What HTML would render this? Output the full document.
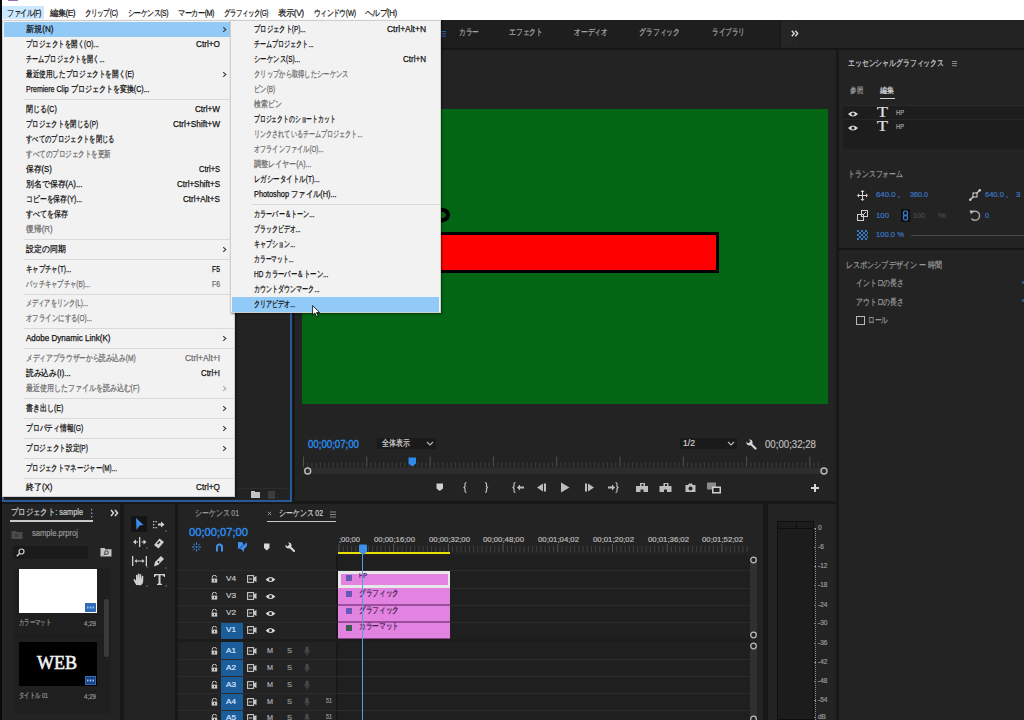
<!DOCTYPE html>
<html><head><meta charset="utf-8">
<style>
*{margin:0;padding:0;box-sizing:border-box}
html,body{width:1024px;height:720px;overflow:hidden;background:#181818;font-family:"Liberation Sans",sans-serif;position:relative}
.a{position:absolute}
.t{position:absolute;white-space:nowrap;line-height:1;transform-origin:0 0;-webkit-text-stroke:0.2px currentColor}
.panel{position:absolute;background:#232323}
.menu{position:absolute;background:#f2f2f2;box-shadow:inset 0 0 0 1px #cfcfcf,1px 1px 2px rgba(0,0,0,.45)}
.mt{position:absolute;white-space:nowrap;font-size:9px;line-height:15px;height:15px;color:#111;transform-origin:0 0;-webkit-text-stroke:0.25px currentColor}
.mt.dis{color:#6e6e6e}
.sep{position:absolute;left:22px;right:1px;height:1px;background:#d9d9d9}
.hl{position:absolute;left:2px;right:2px;height:15px;background:#91c9f7}
.arr{position:absolute;color:#3a3a3a}
.arr.dis{color:#a8a8a8}
.mb{position:absolute;letter-spacing:-0.6px;top:7.3px;height:13px;line-height:13px;font-size:9px;color:#111;white-space:nowrap;transform-origin:0 0;-webkit-text-stroke:0.2px currentColor}
.w{color:#a9a9a9;font-size:9px}
.s{-webkit-text-stroke:0.2px currentColor}
.g{color:#9a9a9a}
.b{color:#2d8ceb}
</style></head><body>

<!-- title + menubar -->
<div class="a" style="left:0;top:0;width:1024px;height:20px;background:#fff"></div>
<div class="a" style="left:8px;top:0;width:10px;height:1px;background:#9a6cc0"></div>
<div class="a" style="left:2px;top:6px;width:42px;height:13px;background:#cce8ff"></div>
<div class="mb" style="left:7px;--w:34px">ファイル(F)</div>
<div class="mb" style="left:50px;--w:25px">編集(E)</div>
<div class="mb" style="left:85px;--w:32.5px">クリップ(C)</div>
<div class="mb" style="left:127.5px;--w:40px">シーケンス(S)</div>
<div class="mb" style="left:177.5px;--w:36px">マーカー(M)</div>
<div class="mb" style="left:223.5px;--w:44px">グラフィック(G)</div>
<div class="mb" style="left:278px;--w:25.5px">表示(V)</div>
<div class="mb" style="left:313.5px;--w:41.5px">ウィンドウ(W)</div>
<div class="mb" style="left:365px;--w:31.5px">ヘルプ(H)</div>

<!-- workspace bar -->
<div class="a" style="left:0;top:20px;width:1024px;height:28px;background:#1e1e1e"></div>
<div class="a" style="left:0;top:48px;width:1024px;height:2px;background:#161616"></div>
<svg class="a" style="left:441px;top:31px" width="5" height="6"><rect x="0" y="0" width="5" height="1" fill="#2f5f9f"/><rect x="0" y="2.3" width="5" height="1" fill="#2f5f9f"/><rect x="0" y="4.6" width="5" height="1" fill="#2f5f9f"/></svg>
<div class="t w s" style="left:459px;top:28px;--w:20px">カラー</div>
<div class="t w s" style="left:509px;top:28px;--w:34px">エフェクト</div>
<div class="t w s" style="left:574px;top:28px;--w:34px">オーディオ</div>
<div class="t w s" style="left:639px;top:28px;--w:41px">グラフィック</div>
<div class="t w s" style="left:712px;top:28px;--w:33px">ライブラリ</div>
<div class="a" style="left:780px;top:20px;width:1px;height:28px;background:#161616"></div>
<div class="a" style="left:781px;top:20px;width:243px;height:28px;background:#222222"></div>
<div class="a" style="left:781px;top:22px;width:18px;height:25px;background:#252525"></div>
<svg class="a" style="left:791px;top:30px" width="8" height="7" viewBox="0 0 8 7"><polyline points="0.8,0.8 3.2,3.5 0.8,6.2" fill="none" stroke="#d8d8d8" stroke-width="1.4"/><polyline points="4.3,0.8 6.7,3.5 4.3,6.2" fill="none" stroke="#d8d8d8" stroke-width="1.4"/></svg>


<!-- source panel (behind menu) -->
<div class="panel" style="left:2px;top:50px;width:290px;height:452px;border:2px solid #275a96"></div>
<div class="a" style="left:237px;top:488px;width:52px;height:1px;background:#2c2c2c"></div>
<div class="a" style="left:251px;top:492px;width:9px;height:6px;background:#c4c4c4"></div>
<div class="a" style="left:251px;top:491px;width:4px;height:1px;background:#c4c4c4"></div>
<div class="a" style="left:268px;top:491px;width:7px;height:8px;background:#3c3c3c"></div>

<!-- program monitor -->
<div class="panel" style="left:295px;top:50px;width:541px;height:451px"></div>

<div class="a" style="left:302px;top:109px;width:526px;height:295px;background:#036614"></div>
<div class="a" style="left:320px;top:232px;width:399px;height:41px;background:#ff0000;border:3px solid #000"></div>
<svg class="a" style="left:430px;top:204px" width="24" height="22" viewBox="0 0 24 22"><path d="M8,5.5 C14.5,5 18.3,7.5 18,11.5 C17.6,15.3 13.5,16.6 8,16.6" fill="none" stroke="#000" stroke-width="4"/></svg>
<div class="t b" style="left:308px;top:439px;font-size:11px;-webkit-text-stroke:0.4px #2d8ceb;--w:51px">00;00;07;00</div>
<div class="a" style="left:377px;top:438px;width:59px;height:11px;background:#1a1a1a"></div>
<div class="t" style="left:382px;top:439px;font-size:9px;color:#cfcfcf;--w:28px">全体表示</div>
<svg class="a" style="left:426px;top:441px" width="8" height="5" viewBox="0 0 8 5"><polyline points="1,1 4,4 7,1" fill="none" stroke="#bdbdbd" stroke-width="1.1"/></svg>
<div class="a" style="left:680px;top:438px;width:57px;height:11px;background:#1a1a1a"></div>
<div class="t" style="left:683px;top:439px;font-size:9px;color:#cfcfcf;--w:12px">1/2</div>
<svg class="a" style="left:727px;top:441px" width="8" height="5" viewBox="0 0 8 5"><polyline points="1,1 4,4 7,1" fill="none" stroke="#bdbdbd" stroke-width="1.1"/></svg>
<svg class="a" style="left:746px;top:439px" width="11" height="11" viewBox="0 0 11 11"><circle cx="3.5" cy="3.5" r="3" fill="#d8d8d8"/><path d="M3.5,3.5 L9.5,9.5" stroke="#d8d8d8" stroke-width="2.2" stroke-linecap="round"/><path d="M-0.5,1.8 L1.8,-0.5 L4.6,2.3 L2.3,4.6 Z" fill="#232323"/></svg>
<div class="t" style="left:764.5px;top:439px;font-size:11px;color:#bfbfbf;--w:51px">00;00;32;28</div>
<svg class="a" style="left:296px;top:0px" width="540" height="500" viewBox="0 0 540 500">
<rect x="7" y="467.5" width="522" height="6.5" fill="#2d2d2d"/>
<rect x="7.00" y="456.5" width="1" height="10.5" fill="#505050"/>
<rect x="11.22" y="462.5" width="1" height="4.5" fill="#3e3e3e"/>
<rect x="15.44" y="462.5" width="1" height="4.5" fill="#3e3e3e"/>
<rect x="19.66" y="462.5" width="1" height="4.5" fill="#3e3e3e"/>
<rect x="23.88" y="462.5" width="1" height="4.5" fill="#3e3e3e"/>
<rect x="28.10" y="462.5" width="1" height="4.5" fill="#3e3e3e"/>
<rect x="32.32" y="462.5" width="1" height="4.5" fill="#3e3e3e"/>
<rect x="36.54" y="462.5" width="1" height="4.5" fill="#3e3e3e"/>
<rect x="40.76" y="462.5" width="1" height="4.5" fill="#3e3e3e"/>
<rect x="44.98" y="462.5" width="1" height="4.5" fill="#3e3e3e"/>
<rect x="49.20" y="462.5" width="1" height="4.5" fill="#3e3e3e"/>
<rect x="53.42" y="462.5" width="1" height="4.5" fill="#3e3e3e"/>
<rect x="57.64" y="462.5" width="1" height="4.5" fill="#3e3e3e"/>
<rect x="61.86" y="462.5" width="1" height="4.5" fill="#3e3e3e"/>
<rect x="66.08" y="462.5" width="1" height="4.5" fill="#3e3e3e"/>
<rect x="70.30" y="456.5" width="1" height="10.5" fill="#505050"/>
<rect x="74.52" y="462.5" width="1" height="4.5" fill="#3e3e3e"/>
<rect x="78.74" y="462.5" width="1" height="4.5" fill="#3e3e3e"/>
<rect x="82.96" y="462.5" width="1" height="4.5" fill="#3e3e3e"/>
<rect x="87.18" y="462.5" width="1" height="4.5" fill="#3e3e3e"/>
<rect x="91.40" y="462.5" width="1" height="4.5" fill="#3e3e3e"/>
<rect x="95.62" y="462.5" width="1" height="4.5" fill="#3e3e3e"/>
<rect x="99.84" y="462.5" width="1" height="4.5" fill="#3e3e3e"/>
<rect x="104.06" y="462.5" width="1" height="4.5" fill="#3e3e3e"/>
<rect x="108.28" y="462.5" width="1" height="4.5" fill="#3e3e3e"/>
<rect x="112.50" y="462.5" width="1" height="4.5" fill="#3e3e3e"/>
<rect x="116.72" y="462.5" width="1" height="4.5" fill="#3e3e3e"/>
<rect x="120.94" y="462.5" width="1" height="4.5" fill="#3e3e3e"/>
<rect x="125.16" y="462.5" width="1" height="4.5" fill="#3e3e3e"/>
<rect x="129.38" y="462.5" width="1" height="4.5" fill="#3e3e3e"/>
<rect x="133.60" y="456.5" width="1" height="10.5" fill="#505050"/>
<rect x="137.82" y="462.5" width="1" height="4.5" fill="#3e3e3e"/>
<rect x="142.04" y="462.5" width="1" height="4.5" fill="#3e3e3e"/>
<rect x="146.26" y="462.5" width="1" height="4.5" fill="#3e3e3e"/>
<rect x="150.48" y="462.5" width="1" height="4.5" fill="#3e3e3e"/>
<rect x="154.70" y="462.5" width="1" height="4.5" fill="#3e3e3e"/>
<rect x="158.92" y="462.5" width="1" height="4.5" fill="#3e3e3e"/>
<rect x="163.14" y="462.5" width="1" height="4.5" fill="#3e3e3e"/>
<rect x="167.36" y="462.5" width="1" height="4.5" fill="#3e3e3e"/>
<rect x="171.58" y="462.5" width="1" height="4.5" fill="#3e3e3e"/>
<rect x="175.80" y="462.5" width="1" height="4.5" fill="#3e3e3e"/>
<rect x="180.02" y="462.5" width="1" height="4.5" fill="#3e3e3e"/>
<rect x="184.24" y="462.5" width="1" height="4.5" fill="#3e3e3e"/>
<rect x="188.46" y="462.5" width="1" height="4.5" fill="#3e3e3e"/>
<rect x="192.68" y="462.5" width="1" height="4.5" fill="#3e3e3e"/>
<rect x="196.90" y="456.5" width="1" height="10.5" fill="#505050"/>
<rect x="201.12" y="462.5" width="1" height="4.5" fill="#3e3e3e"/>
<rect x="205.34" y="462.5" width="1" height="4.5" fill="#3e3e3e"/>
<rect x="209.56" y="462.5" width="1" height="4.5" fill="#3e3e3e"/>
<rect x="213.78" y="462.5" width="1" height="4.5" fill="#3e3e3e"/>
<rect x="218.00" y="462.5" width="1" height="4.5" fill="#3e3e3e"/>
<rect x="222.22" y="462.5" width="1" height="4.5" fill="#3e3e3e"/>
<rect x="226.44" y="462.5" width="1" height="4.5" fill="#3e3e3e"/>
<rect x="230.66" y="462.5" width="1" height="4.5" fill="#3e3e3e"/>
<rect x="234.88" y="462.5" width="1" height="4.5" fill="#3e3e3e"/>
<rect x="239.10" y="462.5" width="1" height="4.5" fill="#3e3e3e"/>
<rect x="243.32" y="462.5" width="1" height="4.5" fill="#3e3e3e"/>
<rect x="247.54" y="462.5" width="1" height="4.5" fill="#3e3e3e"/>
<rect x="251.76" y="462.5" width="1" height="4.5" fill="#3e3e3e"/>
<rect x="255.98" y="462.5" width="1" height="4.5" fill="#3e3e3e"/>
<rect x="260.20" y="456.5" width="1" height="10.5" fill="#505050"/>
<rect x="264.42" y="462.5" width="1" height="4.5" fill="#3e3e3e"/>
<rect x="268.64" y="462.5" width="1" height="4.5" fill="#3e3e3e"/>
<rect x="272.86" y="462.5" width="1" height="4.5" fill="#3e3e3e"/>
<rect x="277.08" y="462.5" width="1" height="4.5" fill="#3e3e3e"/>
<rect x="281.30" y="462.5" width="1" height="4.5" fill="#3e3e3e"/>
<rect x="285.52" y="462.5" width="1" height="4.5" fill="#3e3e3e"/>
<rect x="289.74" y="462.5" width="1" height="4.5" fill="#3e3e3e"/>
<rect x="293.96" y="462.5" width="1" height="4.5" fill="#3e3e3e"/>
<rect x="298.18" y="462.5" width="1" height="4.5" fill="#3e3e3e"/>
<rect x="302.40" y="462.5" width="1" height="4.5" fill="#3e3e3e"/>
<rect x="306.62" y="462.5" width="1" height="4.5" fill="#3e3e3e"/>
<rect x="310.84" y="462.5" width="1" height="4.5" fill="#3e3e3e"/>
<rect x="315.06" y="462.5" width="1" height="4.5" fill="#3e3e3e"/>
<rect x="319.28" y="462.5" width="1" height="4.5" fill="#3e3e3e"/>
<rect x="323.50" y="456.5" width="1" height="10.5" fill="#505050"/>
<rect x="327.72" y="462.5" width="1" height="4.5" fill="#3e3e3e"/>
<rect x="331.94" y="462.5" width="1" height="4.5" fill="#3e3e3e"/>
<rect x="336.16" y="462.5" width="1" height="4.5" fill="#3e3e3e"/>
<rect x="340.38" y="462.5" width="1" height="4.5" fill="#3e3e3e"/>
<rect x="344.60" y="462.5" width="1" height="4.5" fill="#3e3e3e"/>
<rect x="348.82" y="462.5" width="1" height="4.5" fill="#3e3e3e"/>
<rect x="353.04" y="462.5" width="1" height="4.5" fill="#3e3e3e"/>
<rect x="357.26" y="462.5" width="1" height="4.5" fill="#3e3e3e"/>
<rect x="361.48" y="462.5" width="1" height="4.5" fill="#3e3e3e"/>
<rect x="365.70" y="462.5" width="1" height="4.5" fill="#3e3e3e"/>
<rect x="369.92" y="462.5" width="1" height="4.5" fill="#3e3e3e"/>
<rect x="374.14" y="462.5" width="1" height="4.5" fill="#3e3e3e"/>
<rect x="378.36" y="462.5" width="1" height="4.5" fill="#3e3e3e"/>
<rect x="382.58" y="462.5" width="1" height="4.5" fill="#3e3e3e"/>
<rect x="386.80" y="456.5" width="1" height="10.5" fill="#505050"/>
<rect x="391.02" y="462.5" width="1" height="4.5" fill="#3e3e3e"/>
<rect x="395.24" y="462.5" width="1" height="4.5" fill="#3e3e3e"/>
<rect x="399.46" y="462.5" width="1" height="4.5" fill="#3e3e3e"/>
<rect x="403.68" y="462.5" width="1" height="4.5" fill="#3e3e3e"/>
<rect x="407.90" y="462.5" width="1" height="4.5" fill="#3e3e3e"/>
<rect x="412.12" y="462.5" width="1" height="4.5" fill="#3e3e3e"/>
<rect x="416.34" y="462.5" width="1" height="4.5" fill="#3e3e3e"/>
<rect x="420.56" y="462.5" width="1" height="4.5" fill="#3e3e3e"/>
<rect x="424.78" y="462.5" width="1" height="4.5" fill="#3e3e3e"/>
<rect x="429.00" y="462.5" width="1" height="4.5" fill="#3e3e3e"/>
<rect x="433.22" y="462.5" width="1" height="4.5" fill="#3e3e3e"/>
<rect x="437.44" y="462.5" width="1" height="4.5" fill="#3e3e3e"/>
<rect x="441.66" y="462.5" width="1" height="4.5" fill="#3e3e3e"/>
<rect x="445.88" y="462.5" width="1" height="4.5" fill="#3e3e3e"/>
<rect x="450.10" y="456.5" width="1" height="10.5" fill="#505050"/>
<rect x="454.32" y="462.5" width="1" height="4.5" fill="#3e3e3e"/>
<rect x="458.54" y="462.5" width="1" height="4.5" fill="#3e3e3e"/>
<rect x="462.76" y="462.5" width="1" height="4.5" fill="#3e3e3e"/>
<rect x="466.98" y="462.5" width="1" height="4.5" fill="#3e3e3e"/>
<rect x="471.20" y="462.5" width="1" height="4.5" fill="#3e3e3e"/>
<rect x="475.42" y="462.5" width="1" height="4.5" fill="#3e3e3e"/>
<rect x="479.64" y="462.5" width="1" height="4.5" fill="#3e3e3e"/>
<rect x="483.86" y="462.5" width="1" height="4.5" fill="#3e3e3e"/>
<rect x="488.08" y="462.5" width="1" height="4.5" fill="#3e3e3e"/>
<rect x="492.30" y="462.5" width="1" height="4.5" fill="#3e3e3e"/>
<rect x="496.52" y="462.5" width="1" height="4.5" fill="#3e3e3e"/>
<rect x="500.74" y="462.5" width="1" height="4.5" fill="#3e3e3e"/>
<rect x="504.96" y="462.5" width="1" height="4.5" fill="#3e3e3e"/>
<rect x="509.18" y="462.5" width="1" height="4.5" fill="#3e3e3e"/>
<rect x="513.40" y="456.5" width="1" height="10.5" fill="#505050"/>
<rect x="517.62" y="462.5" width="1" height="4.5" fill="#3e3e3e"/>
<rect x="521.84" y="462.5" width="1" height="4.5" fill="#3e3e3e"/>
<circle cx="11.7" cy="471" r="3" fill="none" stroke="#bdbdbd" stroke-width="1.4"/>
<circle cx="528" cy="471" r="3" fill="none" stroke="#bdbdbd" stroke-width="1.4"/>
<path d="M112.5,457.5 h7.5 v6 l-3.75,3 l-3.75,-3 z" fill="#2d8ceb"/>
</svg>
<svg class="a" style="left:430px;top:478px" width="400" height="20" viewBox="430 478 400 20" fill="#bdbdbd" stroke="#bdbdbd">
<path d="M436.5,483.5 h6.5 v5 l-3.25,2.5 l-3.25,-2.5 z" stroke="none" fill="#d0d0d0"/>
<path d="M466.5,482.5 q-1.5,0 -1.5,1.5 v2.5 l-1,1 l1,1 v2.5 q0,1.5 1.5,1.5" fill="none" stroke-width="1.2"/>
<path d="M485,482.5 q1.5,0 1.5,1.5 v2.5 l1,1 l-1,1 v2.5 q0,1.5 -1.5,1.5" fill="none" stroke-width="1.2"/>
<path d="M515.5,482.5 q-1.5,0 -1.5,1.5 v2.5 l-1,1 l1,1 v2.5 q0,1.5 1.5,1.5" fill="none" stroke-width="1.2"/>
<path d="M517,487.5 l3,-3 v2 h4 v2 h-4 v2 z" stroke="none"/>
<path d="M537,487.5 l6,-4 v8 z M544,483.5 h2 v8 h-2 z" stroke="none"/>
<path d="M561,482.5 l8.5,5 l-8.5,5 z" stroke="none"/>
<path d="M585,483.5 h2 v8 h-2 z M588,483.5 l6,4 l-6,4 z" stroke="none"/>
<path d="M608,486.5 h4 v-2 l3,3 l-3,3 v-2 h-4 z" stroke="none"/>
<path d="M615.5,482.5 q1.5,0 1.5,1.5 v2.5 l1,1 l-1,1 v2.5 q0,1.5 -1.5,1.5" fill="none" stroke-width="1.2"/>
<path d="M640,483 h5 v3 h3 v6 h-4.5 v-2.5 h-3 v2.5 h-4.5 v-6 h4 z" stroke="none"/>
<rect x="641.5" y="484" width="2" height="2" fill="#232323" stroke="none"/>
<path d="M663.5,483 h5 v3 h3 v6 h-4.5 v-2.5 h-3 v2.5 h-4.5 v-6 h4 z" stroke="none"/>
<rect x="665" y="484" width="2" height="2" fill="#232323" stroke="none"/>
<path d="M685.5,485 h2.5 l1,-1.5 h3 l1,1.5 h2.5 v7 h-10 z" stroke="none"/>
<circle cx="690.5" cy="488.5" r="2" fill="#232323" stroke="none"/>
<rect x="707" y="482.5" width="9" height="7" stroke="none" fill="#8a8a8a"/>
<rect x="712" y="486.5" width="9" height="7" stroke="none" fill="#d0d0d0"/>
<rect x="713.5" y="488" width="6" height="4" stroke="none" fill="#232323"/>
<path d="M814,484 h2 v3 h3 v2 h-3 v3 h-2 v-3 h-3 v-2 h3 z" stroke="none" fill="#d8d8d8"/>
</svg>

<!-- essential graphics -->
<div class="panel" style="left:839px;top:50px;width:185px;height:670px"></div>
<div class="t" style="left:848px;top:59px;font-size:9px;color:#cfcfcf;--w:96px">エッセンシャルグラフィックス</div>
<svg class="a" style="left:951px;top:60px" width="7" height="7"><rect x="1" y="1" width="5" height="0.8" fill="#a0a0a0"/><rect x="1" y="3.2" width="5" height="0.8" fill="#a0a0a0"/><rect x="1" y="5.4" width="5" height="0.8" fill="#a0a0a0"/></svg>
<div class="t" style="left:850px;top:87px;font-size:8px;color:#a0a0a0;--w:13px">参照</div>
<div class="t" style="left:880px;top:87px;font-size:8px;color:#d6d6d6;--w:14px">編集</div>
<div class="a" style="left:880px;top:97.5px;width:15px;height:1.5px;background:#cfcfcf"></div>
<div class="a" style="left:843px;top:105px;width:181px;height:44px;background:#1d1d1d"></div>
<div class="a" style="left:843px;top:105px;width:181px;height:1px;background:#2a2a2a"></div>
<div class="a" style="left:843px;top:119px;width:181px;height:1px;background:#262626"></div>
<svg class="a" style="left:847px;top:110px" width="12" height="8" viewBox="0 0 12 8"><path d="M1,4 Q6,-1 11,4 Q6,9 1,4 Z" fill="#dcdcdc"/><circle cx="6" cy="4" r="1.6" fill="#1d1d1d"/></svg>
<svg class="a" style="left:847px;top:124px" width="12" height="8" viewBox="0 0 12 8"><path d="M1,4 Q6,-1 11,4 Q6,9 1,4 Z" fill="#dcdcdc"/><circle cx="6" cy="4" r="1.6" fill="#1d1d1d"/></svg>
<div class="t" style="left:877px;top:106px;font-size:14px;font-family:'Liberation Serif',serif;color:#e0e0e0;--w:11px">T</div>
<div class="t" style="left:877px;top:120px;font-size:14px;font-family:'Liberation Serif',serif;color:#e0e0e0;--w:11px">T</div>
<div class="t" style="left:896px;top:109px;font-size:7px;color:#a8a8a8;--w:8px">HP</div>
<div class="t" style="left:896px;top:123px;font-size:7px;color:#a8a8a8;--w:8px">HP</div>
<div class="t" style="left:848px;top:170px;font-size:9px;color:#9a9a9a;--w:55px">トランスフォーム</div>
<svg class="a" style="left:857px;top:190px" width="11" height="11" viewBox="0 0 11 11" fill="#d8d8d8"><rect x="5" y="1" width="1" height="9"/><rect x="1" y="5" width="9" height="1"/><path d="M5.5,0 l2,2 h-4 z M5.5,11 l2,-2 h-4 z M0,5.5 l2,-2 v4 z M11,5.5 l-2,-2 v4 z"/></svg>
<div class="t" style="left:875.5px;top:191px;font-size:8px;color:#3a78c8;--w:24px">640.0 ,</div>
<div class="t" style="left:910px;top:191px;font-size:8px;color:#3a78c8;--w:18px">360.0</div>
<svg class="a" style="left:969px;top:189px" width="12" height="12" viewBox="0 0 12 12"><path d="M1,11 L11,1" stroke="#d0d0d0" stroke-width="1.2"/><rect x="4" y="4" width="4" height="4" fill="#232323" stroke="#d0d0d0" stroke-width="1.1"/><circle cx="1.2" cy="10.8" r="1.2" fill="#d0d0d0"/><circle cx="10.8" cy="1.2" r="1.2" fill="#d0d0d0"/></svg>
<div class="t" style="left:985px;top:191px;font-size:8px;color:#3a78c8;--w:23px">640.0 ,</div>
<div class="t" style="left:1016px;top:191px;font-size:8px;color:#3a78c8">3</div>
<svg class="a" style="left:857px;top:210px" width="11" height="11" viewBox="0 0 11 11"><rect x="0.5" y="4.5" width="6" height="6" fill="none" stroke="#d0d0d0"/><rect x="4.5" y="0.5" width="6" height="6" fill="none" stroke="#d0d0d0"/><path d="M6,5 l3,-3" stroke="#d0d0d0"/></svg>
<div class="t" style="left:875.5px;top:211.5px;font-size:8px;color:#3a78c8;--w:13px">100</div>
<div class="a" style="left:901px;top:209px;width:9px;height:13px;background:#0e0e0e"></div>
<svg class="a" style="left:902px;top:210px" width="7" height="11" viewBox="0 0 7 11"><rect x="1.5" y="0.8" width="4" height="5" rx="2" fill="none" stroke="#3a78c8" stroke-width="1.3"/><rect x="1.5" y="5.2" width="4" height="5" rx="2" fill="none" stroke="#3a78c8" stroke-width="1.3"/></svg>
<div class="t" style="left:913px;top:211.5px;font-size:8px;color:#4a4a4a;--w:12px">100</div>
<div class="t" style="left:937.5px;top:211.5px;font-size:8px;color:#4a4a4a;--w:8px">%</div>
<svg class="a" style="left:969px;top:209px" width="12" height="13" viewBox="0 0 12 13"><path d="M3,3.5 A4.5,4.5 0 1 1 2.5,9.5" fill="none" stroke="#a8a8a8" stroke-width="1.4"/><path d="M0.5,1.5 L4.5,1.5 L2,5.5 Z" fill="#b8b8b8"/></svg>
<div class="t" style="left:985px;top:211.5px;font-size:8px;color:#3a78c8;--w:4px">0</div>
<svg class="a" style="left:857px;top:230px" width="11" height="11" viewBox="0 0 11 11" fill="#3a78c8"><path d="M0,0h2v2h-2zM4,0h2v2h-2zM8,0h2v2h-2zM2,2h2v2h-2zM6,2h2v2h-2zM10,2h1v2h-1zM0,4h2v2h-2zM4,4h2v2h-2zM8,4h2v2h-2zM2,6h2v2h-2zM6,6h2v2h-2zM10,6h1v2h-1zM0,8h2v2h-2zM4,8h2v2h-2zM8,8h2v2h-2z"/></svg>
<div class="t" style="left:875.5px;top:231px;font-size:8px;color:#3a78c8;--w:28px">100.0 %</div>
<div class="a" style="left:911px;top:235px;width:113px;height:1px;background:#4a4a4a"></div>
<div class="a" style="left:839px;top:248px;width:185px;height:2px;background:#151515"></div>
<div class="t" style="left:846px;top:261px;font-size:8.5px;color:#9a9a9a;--w:96px">レスポンシブデザイン ー 時間</div>
<div class="t" style="left:856px;top:279px;font-size:8.5px;color:#9a9a9a;--w:48px">イントロの長さ</div>
<div class="t" style="left:856px;top:297.5px;font-size:8.5px;color:#9a9a9a;--w:48px">アウトロの長さ</div>
<div class="a" style="left:856px;top:315.5px;width:9px;height:9px;border:1.2px solid #b8b8b8"></div>
<div class="t" style="left:868px;top:316px;font-size:8.5px;color:#9a9a9a;--w:20px">ロール</div>
<div class="a" style="left:1022px;top:281px;width:2px;height:3px;background:#3a78c8;opacity:.6"></div>
<div class="a" style="left:1022px;top:299px;width:2px;height:3px;background:#3a78c8;opacity:.6"></div>

<!-- project -->
<div class="panel" style="left:2px;top:504px;width:118px;height:216px"></div>
<div class="t" style="left:11px;top:508px;font-size:9px;color:#cdcdcd;--w:72px">プロジェクト: sample</div>
<svg class="a" style="left:90px;top:509px" width="4" height="9"><rect x="1" y="0" width="1.3" height="1.5" fill="#9a9a9a"/><rect x="1" y="3.5" width="1.3" height="1.5" fill="#9a9a9a"/><rect x="1" y="7" width="1.3" height="1.5" fill="#9a9a9a"/></svg>
<svg class="a" style="left:110px;top:509px" width="9" height="8" viewBox="0 0 9 8"><polyline points="1,1 3.5,4 1,7" fill="none" stroke="#d8d8d8" stroke-width="1.5"/><polyline points="5,1 7.5,4 5,7" fill="none" stroke="#d8d8d8" stroke-width="1.5"/></svg>
<div class="a" style="left:10px;top:520px;width:83px;height:2px;background:#c8c8c8"></div>
<svg class="a" style="left:11px;top:530px" width="12" height="9" viewBox="0 0 12 9"><path d="M0.5,1 h4 l1,1 h6 v7 h-11 z" fill="#4a4a4a"/><rect x="4" y="4" width="3" height="3" fill="#3a3a3a"/></svg>
<div class="t" style="left:32px;top:529px;font-size:9px;color:#9a9a9a;--w:46px">sample.prproj</div>
<div class="a" style="left:13px;top:546px;width:75px;height:13px;background:#1a1a1a"></div>
<svg class="a" style="left:16px;top:548px" width="9" height="9" viewBox="0 0 9 9"><circle cx="5.5" cy="3.5" r="2.5" fill="none" stroke="#d0d0d0" stroke-width="1.2"/><path d="M3.8,5.2 L0.8,8.2" stroke="#d0d0d0" stroke-width="1.5"/></svg>
<svg class="a" style="left:100px;top:547px" width="12" height="10" viewBox="0 0 12 10"><path d="M0.5,1 h4 l1,1.2 h6 v7.3 h-11 z" fill="#c4c4c4"/><circle cx="6.5" cy="5.5" r="1.8" fill="none" stroke="#333" stroke-width="1"/><path d="M5.2,6.8 l-1.5,1.5" stroke="#333"/></svg>
<div class="a" style="left:14px;top:567.5px;width:97px;height:145px;background:#1f1f1f"></div>
<div class="a" style="left:19px;top:569px;width:78px;height:44px;background:#ffffff"></div>
<div class="a" style="left:85px;top:603px;width:11px;height:9px;background:#2f6db8"></div>
<svg class="a" style="left:86px;top:604px" width="9" height="7"><rect x="1" y="2.5" width="1.5" height="2" fill="#9cc3f0"/><rect x="3.7" y="2.5" width="1.5" height="2" fill="#9cc3f0"/><rect x="6.4" y="2.5" width="1.5" height="2" fill="#9cc3f0"/></svg>
<div class="t" style="left:19px;top:619px;font-size:8px;color:#9a9a9a;--w:32px">カラーマット</div>
<div class="t" style="left:84px;top:620px;font-size:8px;color:#9a9a9a;--w:12px">4;29</div>
<div class="a" style="left:14px;top:635px;width:90px;height:1px;background:#191919"></div>
<div class="a" style="left:104px;top:599px;width:5px;height:58px;background:#3a3a3a;border-radius:2px"></div>
<div class="a" style="left:19px;top:642px;width:78px;height:44px;background:#000000"></div>
<div class="t" style="left:37px;top:653px;font-size:19px;font-family:'Liberation Serif',serif;-webkit-text-stroke:0.6px #f2f2f2;color:#f2f2f2;--w:40px">WEB</div>
<div class="a" style="left:85px;top:676px;width:11px;height:9px;background:#1a4280;border:1px solid #2f6db8"></div>
<svg class="a" style="left:86px;top:677px" width="9" height="7"><rect x="1" y="2.5" width="1.5" height="2" fill="#9cc3f0"/><rect x="3.7" y="2.5" width="1.5" height="2" fill="#9cc3f0"/><rect x="6.4" y="2.5" width="1.5" height="2" fill="#9cc3f0"/></svg>
<div class="t" style="left:19px;top:692px;font-size:8px;color:#9a9a9a;--w:29px">タイトル 01</div>
<div class="t" style="left:84px;top:693px;font-size:8px;color:#9a9a9a;--w:12px">4;29</div>

<!-- tools -->
<div class="panel" style="left:124px;top:504px;width:51px;height:216px"></div>
<div class="a" style="left:131px;top:516px;width:16px;height:16px;background:#141414"></div>
<svg class="a" style="left:124px;top:504px" width="51" height="90" viewBox="124 504 51 90">
<path d="M136,518 L143.5,525 L139.5,525.5 L136.5,530 Z" fill="#3d8fe8"/>
<g fill="#d0d0d0">
<rect x="153" y="521" width="1.3" height="1.3"/><rect x="153" y="524" width="1.3" height="1.3"/><rect x="153" y="527" width="1.3" height="1.3"/><rect x="155.5" y="521" width="1.3" height="1.3"/><rect x="155.5" y="527" width="1.3" height="1.3"/>
<path d="M158,523.5 h3 v-2 l3.5,3 l-3.5,3 v-2 h-3 z"/>
<circle cx="166" cy="531" r="0.8" fill="#777"/>
<rect x="139" y="537" width="1.3" height="10"/>
<path d="M133,542 l3,-2.5 v5 z M146.5,542 l-3,-2.5 v5 z"/><rect x="135" y="541.5" width="3" height="1"/><rect x="141.5" y="541.5" width="3" height="1"/>
<circle cx="147" cy="548" r="0.8" fill="#777"/>
<path d="M154,545 l5.5,-6.5 l4.5,3.5 l-5.5,6.5 z"/>
<rect x="157" y="542" width="3.5" height="1.6" fill="#232323" transform="rotate(-50 158.7 542.8)"/>
<rect x="132" y="556" width="1.3" height="10"/><rect x="145.7" y="556" width="1.3" height="10"/>
<path d="M134.5,561 l2.3,-2 v4 z M144.5,561 l-2.3,-2 v4 z"/><rect x="136" y="560.5" width="7" height="1"/>
<circle cx="147" cy="567" r="0.8" fill="#777"/>
<path d="M154,566.5 l1,-4.5 l6,-6 l3,3 l-6,6 z"/>
<circle cx="158.5" cy="562" r="0.9" fill="#232323"/>
<circle cx="166" cy="568" r="0.8" fill="#777"/>
<path d="M136.2,585 L133.6,580.2 Q133.2,579 134.4,579 L136,580.6 L136,575.2 Q136.7,574.3 137.5,575.2 L137.6,579 L137.8,573.8 Q138.6,573 139.3,573.8 L139.4,579 L139.7,574.4 Q140.5,573.6 141.2,574.4 L141.2,579.4 L141.8,576 Q142.6,575.3 143.3,576 L143.2,581.5 Q142.8,584.5 140.8,585.2 Z"/>
<circle cx="147" cy="586" r="0.8" fill="#777"/>
<path d="M154,574 h11 v3 h-1 q-0.3,-1.8 -2,-1.8 h-1.5 v8.3 l1.5,0.5 v1 h-5 v-1 l1.5,-0.5 v-8.3 h-1.5 q-1.7,0 -2,1.8 h-1 z"/>
<circle cx="166" cy="586" r="0.8" fill="#777"/>
</g>
</svg>

<!-- timeline -->
<div class="panel" style="left:178px;top:504px;width:585px;height:216px"></div>
<div class="a" style="left:336px;top:555px;width:414px;height:165px;background:#1f1f1f"></div>
<div class="a" style="left:336px;top:555px;width:1.5px;height:165px;background:#181818"></div>
<div class="t" style="left:195px;top:508.5px;font-size:9px;color:#9a9a9a;--w:44px">シーケンス 01</div>
<svg class="a" style="left:267px;top:511px" width="5" height="5" viewBox="0 0 5 5"><path d="M0.8,0.8 L4.2,4.2 M4.2,0.8 L0.8,4.2" stroke="#9a9a9a" stroke-width="0.9"/></svg>
<div class="t" style="left:279px;top:508.5px;font-size:9px;color:#d2d2d2;--w:44px">シーケンス 02</div>
<svg class="a" style="left:330px;top:510.5px" width="6" height="7"><rect x="0" y="0.5" width="6" height="1" fill="#8a8a8a"/><rect x="0" y="3" width="6" height="1" fill="#8a8a8a"/><rect x="0" y="5.5" width="6" height="1" fill="#8a8a8a"/></svg>
<div class="a" style="left:267px;top:520.5px;width:69px;height:1.8px;background:#c8c8c8"></div>
<div class="t b" style="left:189px;top:527px;font-size:11.5px;-webkit-text-stroke:0.45px #2d8ceb;--w:59px">00;00;07;00</div>
<svg class="a" style="left:190px;top:540px" width="110" height="14" viewBox="190 540 110 14">
<g fill="#3d8fe8">
<path d="M196.5,542.5 v9 M192,547 h9 M193.3,543.8 l6.4,6.4 M199.7,543.8 l-6.4,6.4" stroke="#3d8fe8" stroke-width="1"/><circle cx="196.5" cy="547" r="2.2" fill="#232323"/><circle cx="196.5" cy="547" r="0.9" fill="#3d8fe8"/>
<path d="M216,551.5 v-4.5 a3.5,3.5 0 0 1 7,0 v4.5 h-2 v-4.5 a1.5,1.5 0 0 0 -3,0 v4.5 z"/>
<path d="M238,542 h4 l2,3 l3,-3 v4 l-3,3 v3 l-3,-3 h-3 z"/>
<path d="M239,549 l8,-7" stroke="#1a4a80" stroke-width="1"/>
</g>
<path d="M264,543.5 h5.5 v4.5 l-2.75,2.5 l-2.75,-2.5 z" fill="#d8d8d8"/>
<g transform="translate(285,542)"><circle cx="3.5" cy="3.5" r="3" fill="#d8d8d8"/><path d="M3.5,3.5 L9,9" stroke="#d8d8d8" stroke-width="2.1" stroke-linecap="round"/><path d="M-0.5,1.8 L1.8,-0.5 L4.6,2.3 L2.3,4.6 Z" fill="#232323"/></g>
</svg>
<div class="t" style="left:339px;top:535.5px;font-size:8px;color:#bdbdbd;--w:21px">;00;00</div>
<div class="t" style="left:374px;top:535.5px;font-size:8px;color:#bdbdbd;--w:41px">00;00;16;00</div>
<div class="t" style="left:429px;top:535.5px;font-size:8px;color:#bdbdbd;--w:41px">00;00;32;00</div>
<div class="t" style="left:483px;top:535.5px;font-size:8px;color:#bdbdbd;--w:41px">00;00;48;00</div>
<div class="t" style="left:538px;top:535.5px;font-size:8px;color:#bdbdbd;--w:41px">00;01;04;02</div>
<div class="t" style="left:593px;top:535.5px;font-size:8px;color:#bdbdbd;--w:41px">00;01;20;02</div>
<div class="t" style="left:648px;top:535.5px;font-size:8px;color:#bdbdbd;--w:41px">00;01;36;02</div>
<div class="t" style="left:702px;top:535.5px;font-size:8px;color:#bdbdbd;--w:41px">00;01;52;02</div>
<svg class="a" style="left:0;top:0" width="1024" height="720"><rect x="338.50" y="544" width="1" height="8" fill="#555555"/><rect x="342.71" y="546" width="1" height="6" fill="#404040"/><rect x="346.92" y="546" width="1" height="6" fill="#404040"/><rect x="351.12" y="546" width="1" height="6" fill="#404040"/><rect x="355.33" y="546" width="1" height="6" fill="#404040"/><rect x="359.54" y="546" width="1" height="6" fill="#404040"/><rect x="363.75" y="546" width="1" height="6" fill="#404040"/><rect x="367.95" y="546" width="1" height="6" fill="#404040"/><rect x="372.16" y="546" width="1" height="6" fill="#404040"/><rect x="376.37" y="546" width="1" height="6" fill="#404040"/><rect x="380.58" y="546" width="1" height="6" fill="#404040"/><rect x="384.78" y="546" width="1" height="6" fill="#404040"/><rect x="388.99" y="546" width="1" height="6" fill="#404040"/><rect x="393.20" y="544" width="1" height="8" fill="#555555"/><rect x="397.41" y="546" width="1" height="6" fill="#404040"/><rect x="401.62" y="546" width="1" height="6" fill="#404040"/><rect x="405.82" y="546" width="1" height="6" fill="#404040"/><rect x="410.03" y="546" width="1" height="6" fill="#404040"/><rect x="414.24" y="546" width="1" height="6" fill="#404040"/><rect x="418.45" y="546" width="1" height="6" fill="#404040"/><rect x="422.65" y="546" width="1" height="6" fill="#404040"/><rect x="426.86" y="546" width="1" height="6" fill="#404040"/><rect x="431.07" y="546" width="1" height="6" fill="#404040"/><rect x="435.28" y="546" width="1" height="6" fill="#404040"/><rect x="439.48" y="546" width="1" height="6" fill="#404040"/><rect x="443.69" y="546" width="1" height="6" fill="#404040"/><rect x="447.90" y="544" width="1" height="8" fill="#555555"/><rect x="452.11" y="546" width="1" height="6" fill="#404040"/><rect x="456.32" y="546" width="1" height="6" fill="#404040"/><rect x="460.52" y="546" width="1" height="6" fill="#404040"/><rect x="464.73" y="546" width="1" height="6" fill="#404040"/><rect x="468.94" y="546" width="1" height="6" fill="#404040"/><rect x="473.15" y="546" width="1" height="6" fill="#404040"/><rect x="477.35" y="546" width="1" height="6" fill="#404040"/><rect x="481.56" y="546" width="1" height="6" fill="#404040"/><rect x="485.77" y="546" width="1" height="6" fill="#404040"/><rect x="489.98" y="546" width="1" height="6" fill="#404040"/><rect x="494.18" y="546" width="1" height="6" fill="#404040"/><rect x="498.39" y="546" width="1" height="6" fill="#404040"/><rect x="502.60" y="544" width="1" height="8" fill="#555555"/><rect x="506.81" y="546" width="1" height="6" fill="#404040"/><rect x="511.02" y="546" width="1" height="6" fill="#404040"/><rect x="515.22" y="546" width="1" height="6" fill="#404040"/><rect x="519.43" y="546" width="1" height="6" fill="#404040"/><rect x="523.64" y="546" width="1" height="6" fill="#404040"/><rect x="527.85" y="546" width="1" height="6" fill="#404040"/><rect x="532.05" y="546" width="1" height="6" fill="#404040"/><rect x="536.26" y="546" width="1" height="6" fill="#404040"/><rect x="540.47" y="546" width="1" height="6" fill="#404040"/><rect x="544.68" y="546" width="1" height="6" fill="#404040"/><rect x="548.88" y="546" width="1" height="6" fill="#404040"/><rect x="553.09" y="546" width="1" height="6" fill="#404040"/><rect x="557.30" y="544" width="1" height="8" fill="#555555"/><rect x="561.51" y="546" width="1" height="6" fill="#404040"/><rect x="565.72" y="546" width="1" height="6" fill="#404040"/><rect x="569.92" y="546" width="1" height="6" fill="#404040"/><rect x="574.13" y="546" width="1" height="6" fill="#404040"/><rect x="578.34" y="546" width="1" height="6" fill="#404040"/><rect x="582.55" y="546" width="1" height="6" fill="#404040"/><rect x="586.75" y="546" width="1" height="6" fill="#404040"/><rect x="590.96" y="546" width="1" height="6" fill="#404040"/><rect x="595.17" y="546" width="1" height="6" fill="#404040"/><rect x="599.38" y="546" width="1" height="6" fill="#404040"/><rect x="603.58" y="546" width="1" height="6" fill="#404040"/><rect x="607.79" y="546" width="1" height="6" fill="#404040"/><rect x="612.00" y="544" width="1" height="8" fill="#555555"/><rect x="616.21" y="546" width="1" height="6" fill="#404040"/><rect x="620.42" y="546" width="1" height="6" fill="#404040"/><rect x="624.62" y="546" width="1" height="6" fill="#404040"/><rect x="628.83" y="546" width="1" height="6" fill="#404040"/><rect x="633.04" y="546" width="1" height="6" fill="#404040"/><rect x="637.25" y="546" width="1" height="6" fill="#404040"/><rect x="641.45" y="546" width="1" height="6" fill="#404040"/><rect x="645.66" y="546" width="1" height="6" fill="#404040"/><rect x="649.87" y="546" width="1" height="6" fill="#404040"/><rect x="654.08" y="546" width="1" height="6" fill="#404040"/><rect x="658.28" y="546" width="1" height="6" fill="#404040"/><rect x="662.49" y="546" width="1" height="6" fill="#404040"/><rect x="666.70" y="544" width="1" height="8" fill="#555555"/><rect x="670.91" y="546" width="1" height="6" fill="#404040"/><rect x="675.12" y="546" width="1" height="6" fill="#404040"/><rect x="679.32" y="546" width="1" height="6" fill="#404040"/><rect x="683.53" y="546" width="1" height="6" fill="#404040"/><rect x="687.74" y="546" width="1" height="6" fill="#404040"/><rect x="691.95" y="546" width="1" height="6" fill="#404040"/><rect x="696.15" y="546" width="1" height="6" fill="#404040"/><rect x="700.36" y="546" width="1" height="6" fill="#404040"/><rect x="704.57" y="546" width="1" height="6" fill="#404040"/><rect x="708.78" y="546" width="1" height="6" fill="#404040"/><rect x="712.98" y="546" width="1" height="6" fill="#404040"/><rect x="717.19" y="546" width="1" height="6" fill="#404040"/><rect x="721.40" y="544" width="1" height="8" fill="#555555"/><rect x="725.61" y="546" width="1" height="6" fill="#404040"/><rect x="729.82" y="546" width="1" height="6" fill="#404040"/><rect x="734.02" y="546" width="1" height="6" fill="#404040"/><rect x="738.23" y="546" width="1" height="6" fill="#404040"/><rect x="742.44" y="546" width="1" height="6" fill="#404040"/><rect x="746.65" y="546" width="1" height="6" fill="#404040"/><rect x="338" y="552" width="112" height="2" fill="#e8e000"/></svg>
<div class="a" style="left:178px;top:570px;width:572px;height:1px;background:#2c2c2c"></div>
<div class="a" style="left:178px;top:587.5px;width:572px;height:1px;background:#2c2c2c"></div>
<div class="a" style="left:178px;top:604.5px;width:572px;height:1px;background:#2c2c2c"></div>
<div class="a" style="left:178px;top:621.5px;width:572px;height:1px;background:#2c2c2c"></div>
<div class="a" style="left:178px;top:638.5px;width:572px;height:3px;background:#1c1c1c"></div>
<div class="a" style="left:178px;top:659px;width:572px;height:1px;background:#2c2c2c"></div>
<div class="a" style="left:178px;top:676px;width:572px;height:1px;background:#2c2c2c"></div>
<div class="a" style="left:178px;top:693px;width:572px;height:1px;background:#2c2c2c"></div>
<div class="a" style="left:178px;top:710px;width:572px;height:1px;background:#2c2c2c"></div>
<svg class="a" style="left:211px;top:575.0px" width="7" height="8" viewBox="0 0 7 8"><path d="M1.3,3.6 v-1.3 a2.1,2.1 0 0 1 4.2,0" fill="none" stroke="#c8c8c8" stroke-width="1"/><rect x="0.6" y="3.6" width="5.6" height="4" fill="#c8c8c8"/><rect x="3" y="4.7" width="1" height="1.6" fill="#232323"/></svg>
<div class="t" style="left:225.5px;top:575px;font-size:8px;color:#c8c8c8;--w:10px">V4</div>
<svg class="a" style="left:247px;top:575px" width="10" height="8" viewBox="0 0 10 8"><rect x="0.6" y="0.6" width="6" height="6.8" fill="none" stroke="#c8c8c8" stroke-width="1.1"/><rect x="1.8" y="3.5" width="3.5" height="1" fill="#c8c8c8"/><path d="M6.5,2.5 l3,-1.5 v6 l-3,-1.5 z" fill="#c8c8c8"/></svg>
<svg class="a" style="left:265px;top:575.5px" width="11" height="7" viewBox="0 0 11 7"><path d="M0.6,3.5 Q5.5,-1.5 10.4,3.5 Q5.5,8.5 0.6,3.5 Z" fill="#d8d8d8"/><circle cx="5.5" cy="3.5" r="1.5" fill="#232323"/></svg>
<svg class="a" style="left:211px;top:592.0px" width="7" height="8" viewBox="0 0 7 8"><path d="M1.3,3.6 v-1.3 a2.1,2.1 0 0 1 4.2,0" fill="none" stroke="#c8c8c8" stroke-width="1"/><rect x="0.6" y="3.6" width="5.6" height="4" fill="#c8c8c8"/><rect x="3" y="4.7" width="1" height="1.6" fill="#232323"/></svg>
<div class="t" style="left:225.5px;top:592px;font-size:8px;color:#c8c8c8;--w:10px">V3</div>
<svg class="a" style="left:247px;top:592px" width="10" height="8" viewBox="0 0 10 8"><rect x="0.6" y="0.6" width="6" height="6.8" fill="none" stroke="#c8c8c8" stroke-width="1.1"/><rect x="1.8" y="3.5" width="3.5" height="1" fill="#c8c8c8"/><path d="M6.5,2.5 l3,-1.5 v6 l-3,-1.5 z" fill="#c8c8c8"/></svg>
<svg class="a" style="left:265px;top:592.5px" width="11" height="7" viewBox="0 0 11 7"><path d="M0.6,3.5 Q5.5,-1.5 10.4,3.5 Q5.5,8.5 0.6,3.5 Z" fill="#d8d8d8"/><circle cx="5.5" cy="3.5" r="1.5" fill="#232323"/></svg>
<svg class="a" style="left:211px;top:609.0px" width="7" height="8" viewBox="0 0 7 8"><path d="M1.3,3.6 v-1.3 a2.1,2.1 0 0 1 4.2,0" fill="none" stroke="#c8c8c8" stroke-width="1"/><rect x="0.6" y="3.6" width="5.6" height="4" fill="#c8c8c8"/><rect x="3" y="4.7" width="1" height="1.6" fill="#232323"/></svg>
<div class="t" style="left:225.5px;top:609px;font-size:8px;color:#c8c8c8;--w:10px">V2</div>
<svg class="a" style="left:247px;top:609px" width="10" height="8" viewBox="0 0 10 8"><rect x="0.6" y="0.6" width="6" height="6.8" fill="none" stroke="#c8c8c8" stroke-width="1.1"/><rect x="1.8" y="3.5" width="3.5" height="1" fill="#c8c8c8"/><path d="M6.5,2.5 l3,-1.5 v6 l-3,-1.5 z" fill="#c8c8c8"/></svg>
<svg class="a" style="left:265px;top:609.5px" width="11" height="7" viewBox="0 0 11 7"><path d="M0.6,3.5 Q5.5,-1.5 10.4,3.5 Q5.5,8.5 0.6,3.5 Z" fill="#d8d8d8"/><circle cx="5.5" cy="3.5" r="1.5" fill="#232323"/></svg>
<svg class="a" style="left:211px;top:626.0px" width="7" height="8" viewBox="0 0 7 8"><path d="M1.3,3.6 v-1.3 a2.1,2.1 0 0 1 4.2,0" fill="none" stroke="#c8c8c8" stroke-width="1"/><rect x="0.6" y="3.6" width="5.6" height="4" fill="#c8c8c8"/><rect x="3" y="4.7" width="1" height="1.6" fill="#232323"/></svg>
<div class="a" style="left:220.5px;top:622.5px;width:22px;height:16px;background:#1b5c9a"></div>
<div class="t" style="left:225.5px;top:626px;font-size:8px;color:#d8e8ff;--w:10px">V1</div>
<svg class="a" style="left:247px;top:626px" width="10" height="8" viewBox="0 0 10 8"><rect x="0.6" y="0.6" width="6" height="6.8" fill="none" stroke="#c8c8c8" stroke-width="1.1"/><rect x="1.8" y="3.5" width="3.5" height="1" fill="#c8c8c8"/><path d="M6.5,2.5 l3,-1.5 v6 l-3,-1.5 z" fill="#c8c8c8"/></svg>
<svg class="a" style="left:265px;top:626.5px" width="11" height="7" viewBox="0 0 11 7"><path d="M0.6,3.5 Q5.5,-1.5 10.4,3.5 Q5.5,8.5 0.6,3.5 Z" fill="#d8d8d8"/><circle cx="5.5" cy="3.5" r="1.5" fill="#232323"/></svg>
<div class="a" style="left:220.5px;top:641.8px;width:22px;height:16.800000000000068px;background:#1b5c9a"></div><div class="a" style="left:220.5px;top:659.8px;width:22px;height:15.800000000000068px;background:#1b5c9a"></div><div class="a" style="left:220.5px;top:676.8px;width:22px;height:15.800000000000068px;background:#1b5c9a"></div><div class="a" style="left:220.5px;top:693.8px;width:22px;height:15.800000000000068px;background:#1b5c9a"></div><div class="a" style="left:220.5px;top:710.8px;width:22px;height:9.200000000000045px;background:#1b5c9a"></div>
<svg class="a" style="left:211px;top:646.5px" width="7" height="8" viewBox="0 0 7 8"><path d="M1.3,3.6 v-1.3 a2.1,2.1 0 0 1 4.2,0" fill="none" stroke="#c8c8c8" stroke-width="1"/><rect x="0.6" y="3.6" width="5.6" height="4" fill="#c8c8c8"/><rect x="3" y="4.7" width="1" height="1.6" fill="#232323"/></svg>
<div class="t" style="left:225.5px;top:646.5px;font-size:8px;color:#d8e8ff;--w:10px">A1</div>
<svg class="a" style="left:247px;top:646.5px" width="10" height="8" viewBox="0 0 10 8"><rect x="0.6" y="0.6" width="6" height="6.8" fill="none" stroke="#c8c8c8" stroke-width="1.1"/><rect x="1.8" y="3.5" width="3.5" height="1" fill="#c8c8c8"/><path d="M6.5,2.5 l3,-1.5 v6 l-3,-1.5 z" fill="#c8c8c8"/></svg>
<div class="t" style="left:267px;top:646.5px;font-size:7.5px;color:#b0b0b0;--w:6px">M</div>
<div class="t" style="left:286.5px;top:646.5px;font-size:7.5px;color:#9a9a9a;--w:5px">S</div>
<svg class="a" style="left:304px;top:645.5px" width="6" height="10" viewBox="0 0 6 10"><rect x="1.5" y="0.5" width="3" height="6" rx="1.5" fill="#4a4a4a"/><path d="M0.7,4.5 q0,3 2.3,3 q2.3,0 2.3,-3 M3,7.5 v2" fill="none" stroke="#4a4a4a" stroke-width="0.9"/></svg>
<svg class="a" style="left:211px;top:663.5px" width="7" height="8" viewBox="0 0 7 8"><path d="M1.3,3.6 v-1.3 a2.1,2.1 0 0 1 4.2,0" fill="none" stroke="#c8c8c8" stroke-width="1"/><rect x="0.6" y="3.6" width="5.6" height="4" fill="#c8c8c8"/><rect x="3" y="4.7" width="1" height="1.6" fill="#232323"/></svg>
<div class="t" style="left:225.5px;top:663.5px;font-size:8px;color:#d8e8ff;--w:10px">A2</div>
<svg class="a" style="left:247px;top:663.5px" width="10" height="8" viewBox="0 0 10 8"><rect x="0.6" y="0.6" width="6" height="6.8" fill="none" stroke="#c8c8c8" stroke-width="1.1"/><rect x="1.8" y="3.5" width="3.5" height="1" fill="#c8c8c8"/><path d="M6.5,2.5 l3,-1.5 v6 l-3,-1.5 z" fill="#c8c8c8"/></svg>
<div class="t" style="left:267px;top:663.5px;font-size:7.5px;color:#b0b0b0;--w:6px">M</div>
<div class="t" style="left:286.5px;top:663.5px;font-size:7.5px;color:#9a9a9a;--w:5px">S</div>
<svg class="a" style="left:304px;top:662.5px" width="6" height="10" viewBox="0 0 6 10"><rect x="1.5" y="0.5" width="3" height="6" rx="1.5" fill="#4a4a4a"/><path d="M0.7,4.5 q0,3 2.3,3 q2.3,0 2.3,-3 M3,7.5 v2" fill="none" stroke="#4a4a4a" stroke-width="0.9"/></svg>
<svg class="a" style="left:211px;top:680.5px" width="7" height="8" viewBox="0 0 7 8"><path d="M1.3,3.6 v-1.3 a2.1,2.1 0 0 1 4.2,0" fill="none" stroke="#c8c8c8" stroke-width="1"/><rect x="0.6" y="3.6" width="5.6" height="4" fill="#c8c8c8"/><rect x="3" y="4.7" width="1" height="1.6" fill="#232323"/></svg>
<div class="t" style="left:225.5px;top:680.5px;font-size:8px;color:#d8e8ff;--w:10px">A3</div>
<svg class="a" style="left:247px;top:680.5px" width="10" height="8" viewBox="0 0 10 8"><rect x="0.6" y="0.6" width="6" height="6.8" fill="none" stroke="#c8c8c8" stroke-width="1.1"/><rect x="1.8" y="3.5" width="3.5" height="1" fill="#c8c8c8"/><path d="M6.5,2.5 l3,-1.5 v6 l-3,-1.5 z" fill="#c8c8c8"/></svg>
<div class="t" style="left:267px;top:680.5px;font-size:7.5px;color:#b0b0b0;--w:6px">M</div>
<div class="t" style="left:286.5px;top:680.5px;font-size:7.5px;color:#9a9a9a;--w:5px">S</div>
<svg class="a" style="left:304px;top:679.5px" width="6" height="10" viewBox="0 0 6 10"><rect x="1.5" y="0.5" width="3" height="6" rx="1.5" fill="#4a4a4a"/><path d="M0.7,4.5 q0,3 2.3,3 q2.3,0 2.3,-3 M3,7.5 v2" fill="none" stroke="#4a4a4a" stroke-width="0.9"/></svg>
<svg class="a" style="left:211px;top:697.5px" width="7" height="8" viewBox="0 0 7 8"><path d="M1.3,3.6 v-1.3 a2.1,2.1 0 0 1 4.2,0" fill="none" stroke="#c8c8c8" stroke-width="1"/><rect x="0.6" y="3.6" width="5.6" height="4" fill="#c8c8c8"/><rect x="3" y="4.7" width="1" height="1.6" fill="#232323"/></svg>
<div class="t" style="left:225.5px;top:697.5px;font-size:8px;color:#d8e8ff;--w:10px">A4</div>
<svg class="a" style="left:247px;top:697.5px" width="10" height="8" viewBox="0 0 10 8"><rect x="0.6" y="0.6" width="6" height="6.8" fill="none" stroke="#c8c8c8" stroke-width="1.1"/><rect x="1.8" y="3.5" width="3.5" height="1" fill="#c8c8c8"/><path d="M6.5,2.5 l3,-1.5 v6 l-3,-1.5 z" fill="#c8c8c8"/></svg>
<div class="t" style="left:267px;top:697.5px;font-size:7.5px;color:#b0b0b0;--w:6px">M</div>
<div class="t" style="left:286.5px;top:697.5px;font-size:7.5px;color:#9a9a9a;--w:5px">S</div>
<svg class="a" style="left:304px;top:696.5px" width="6" height="10" viewBox="0 0 6 10"><rect x="1.5" y="0.5" width="3" height="6" rx="1.5" fill="#4a4a4a"/><path d="M0.7,4.5 q0,3 2.3,3 q2.3,0 2.3,-3 M3,7.5 v2" fill="none" stroke="#4a4a4a" stroke-width="0.9"/></svg>
<svg class="a" style="left:211px;top:714.0px" width="7" height="8" viewBox="0 0 7 8"><path d="M1.3,3.6 v-1.3 a2.1,2.1 0 0 1 4.2,0" fill="none" stroke="#c8c8c8" stroke-width="1"/><rect x="0.6" y="3.6" width="5.6" height="4" fill="#c8c8c8"/><rect x="3" y="4.7" width="1" height="1.6" fill="#232323"/></svg>
<div class="t" style="left:225.5px;top:714px;font-size:8px;color:#d8e8ff;--w:10px">A5</div>
<svg class="a" style="left:247px;top:714px" width="10" height="8" viewBox="0 0 10 8"><rect x="0.6" y="0.6" width="6" height="6.8" fill="none" stroke="#c8c8c8" stroke-width="1.1"/><rect x="1.8" y="3.5" width="3.5" height="1" fill="#c8c8c8"/><path d="M6.5,2.5 l3,-1.5 v6 l-3,-1.5 z" fill="#c8c8c8"/></svg>
<div class="t" style="left:267px;top:714px;font-size:7.5px;color:#b0b0b0;--w:6px">M</div>
<div class="t" style="left:286.5px;top:714px;font-size:7.5px;color:#9a9a9a;--w:5px">S</div>
<svg class="a" style="left:304px;top:713px" width="6" height="10" viewBox="0 0 6 10"><rect x="1.5" y="0.5" width="3" height="6" rx="1.5" fill="#4a4a4a"/><path d="M0.7,4.5 q0,3 2.3,3 q2.3,0 2.3,-3 M3,7.5 v2" fill="none" stroke="#4a4a4a" stroke-width="0.9"/></svg>
<div class="t" style="left:326px;top:696.5px;font-size:7px;color:#9a9a9a;--w:6px">51</div>
<div class="t" style="left:326px;top:713px;font-size:7px;color:#9a9a9a;--w:6px">51</div>
<div class="a" style="left:338px;top:587.5px;width:112px;height:51px;background:#e283e2"></div>
<div class="a" style="left:338px;top:604px;width:112px;height:1.5px;background:#9c4e9c"></div>
<div class="a" style="left:338px;top:621px;width:112px;height:1.5px;background:#9c4e9c"></div>
<div class="a" style="left:338px;top:637.8px;width:112px;height:1px;background:#8a448a"></div>
<div class="a" style="left:338px;top:571px;width:112px;height:16.5px;background:#e8e8e8"></div>
<div class="a" style="left:341px;top:574px;width:106.5px;height:10.5px;background:#e283e2"></div>






<div class="a" style="left:345.5px;top:574.5px;width:6px;height:6px;background:#6a58b8"></div>
<div class="a" style="left:345.5px;top:590.5px;width:6px;height:6px;background:#6a58b8"></div>
<div class="a" style="left:345.5px;top:607.5px;width:6px;height:6px;background:#6a58b8"></div>
<div class="a" style="left:345.5px;top:624.5px;width:6px;height:6px;background:#3e5a48"></div>
<div class="t" style="left:359px;top:572px;font-size:7.5px;color:#3a1a5a;--w:8px">HP</div>
<div class="t" style="left:358.5px;top:588.5px;font-size:9px;color:#40204a;--w:40px">グラフィック</div>
<div class="t" style="left:358.5px;top:605.5px;font-size:9px;color:#40204a;--w:40px">グラフィック</div>
<div class="t" style="left:358.5px;top:622px;font-size:9px;color:#40204a;--w:40px">カラーマット</div>
<div class="a" style="left:362.2px;top:553px;width:1px;height:167px;background:#5a9be6"></div>
<svg class="a" style="left:357.5px;top:544px" width="10" height="12" viewBox="0 0 10 12"><path d="M1,1.5 q0,-1 1,-1 h6 q1,0 1,1 v6 l-4,3.5 l-4,-3.5 z" fill="#3d8fe8"/></svg>
<div class="a" style="left:750px;top:560px;width:7px;height:75px;background:#303030"></div>
<div class="a" style="left:750px;top:646px;width:7px;height:74px;background:#303030"></div>
<svg class="a" style="left:749px;top:556px" width="9" height="8" viewBox="0 0 9 8"><circle cx="4.5" cy="4" r="2.8" fill="#232323" stroke="#b8b8b8" stroke-width="1.3"/></svg>
<svg class="a" style="left:749px;top:630.5px" width="9" height="8" viewBox="0 0 9 8"><circle cx="4.5" cy="4" r="2.8" fill="#232323" stroke="#b8b8b8" stroke-width="1.3"/></svg>
<svg class="a" style="left:749px;top:642px" width="9" height="8" viewBox="0 0 9 8"><circle cx="4.5" cy="4" r="2.8" fill="#232323" stroke="#b8b8b8" stroke-width="1.3"/></svg>
<svg class="a" style="left:749px;top:715px" width="9" height="8" viewBox="0 0 9 8"><circle cx="4.5" cy="4" r="2.8" fill="#232323" stroke="#b8b8b8" stroke-width="1.3"/></svg>
<!-- audio -->
<div class="panel" style="left:768px;top:504px;width:68px;height:216px"></div>
<div class="a" style="left:777px;top:521px;width:37px;height:199px;background:#1c1c1c;border:1px solid #0e0e0e"></div>
<div class="a" style="left:777px;top:527.5px;width:37px;height:1px;background:#0e0e0e"></div>
<div class="a" style="left:795.5px;top:521px;width:1px;height:7px;background:#0e0e0e"></div>
<div class="a" style="left:814.5px;top:528px;width:1px;height:192px;border-left:1px dotted #8a8a8a"></div>
<div class="t" style="left:818px;top:525px;font-size:6.5px;color:#9a9a9a">0</div>
<div class="a" style="left:814px;top:528px;width:2px;height:1px;background:#8a8a8a"></div>
<div class="t" style="left:818px;top:544px;font-size:6.5px;color:#9a9a9a">-6</div>
<div class="a" style="left:814px;top:547px;width:2px;height:1px;background:#8a8a8a"></div>
<div class="t" style="left:818px;top:563px;font-size:6.5px;color:#9a9a9a">-12</div>
<div class="a" style="left:814px;top:566px;width:2px;height:1px;background:#8a8a8a"></div>
<div class="t" style="left:818px;top:582px;font-size:6.5px;color:#9a9a9a">-18</div>
<div class="a" style="left:814px;top:585px;width:2px;height:1px;background:#8a8a8a"></div>
<div class="t" style="left:818px;top:601.5px;font-size:6.5px;color:#9a9a9a">-24</div>
<div class="a" style="left:814px;top:604.5px;width:2px;height:1px;background:#8a8a8a"></div>
<div class="t" style="left:818px;top:620px;font-size:6.5px;color:#9a9a9a">-30</div>
<div class="a" style="left:814px;top:623px;width:2px;height:1px;background:#8a8a8a"></div>
<div class="t" style="left:818px;top:639.5px;font-size:6.5px;color:#9a9a9a">-36</div>
<div class="a" style="left:814px;top:642.5px;width:2px;height:1px;background:#8a8a8a"></div>
<div class="t" style="left:818px;top:658.5px;font-size:6.5px;color:#9a9a9a">-42</div>
<div class="a" style="left:814px;top:661.5px;width:2px;height:1px;background:#8a8a8a"></div>
<div class="t" style="left:818px;top:678px;font-size:6.5px;color:#9a9a9a">-48</div>
<div class="a" style="left:814px;top:681px;width:2px;height:1px;background:#8a8a8a"></div>
<div class="t" style="left:818px;top:696.5px;font-size:6.5px;color:#9a9a9a">-54</div>
<div class="a" style="left:814px;top:699.5px;width:2px;height:1px;background:#8a8a8a"></div>
<div class="t" style="left:818px;top:714px;font-size:6.5px;color:#9a9a9a">dB</div>
<div class="a" style="left:814px;top:717px;width:2px;height:1px;background:#8a8a8a"></div>

<!-- menus -->
<div class="menu" style="left:2px;top:20px;width:233px;height:477px">
<div class="hl" style="top:2.00px"></div>
<div class="mt" style="left:24px;top:2.00px;--w:27.5px">新規(N)</div>
<svg class="arr" style="left:220px;top:6.00px" width="5" height="7" viewBox="0 0 5 7"><polyline points="1.2,1.2 3.8,3.5 1.2,5.8" fill="none" stroke="currentColor" stroke-width="1.1"/></svg>
<div class="mt" style="left:24px;top:17.00px;--w:72.75px">プロジェクトを開く(O)...</div>
<div class="mt" style="left:194px;top:17.00px;--w:24px">Ctrl+O</div>
<div class="mt" style="left:24px;top:32.00px;--w:78.5px">チームプロジェクトを開く...</div>
<div class="mt" style="left:24px;top:47.00px;--w:108px">最近使用したプロジェクトを開く(E)</div>
<svg class="arr" style="left:220px;top:51.00px" width="5" height="7" viewBox="0 0 5 7"><polyline points="1.2,1.2 3.8,3.5 1.2,5.8" fill="none" stroke="currentColor" stroke-width="1.1"/></svg>
<div class="mt" style="left:24px;top:62.00px;--w:123.5px">Premiere Clip プロジェクトを変換(C)...</div>
<div class="sep" style="top:79.00px"></div>
<div class="mt" style="left:24px;top:81.85px;--w:30.75px">閉じる(C)</div>
<div class="mt" style="left:193px;top:81.85px;--w:25px">Ctrl+W</div>
<div class="mt" style="left:24px;top:96.85px;--w:72px">プロジェクトを閉じる(P)</div>
<div class="mt" style="left:171px;top:96.85px;--w:47px">Ctrl+Shift+W</div>
<div class="mt" style="left:24px;top:111.85px;--w:88.5px">すべてのプロジェクトを閉じる</div>
<div class="mt dis" style="left:24px;top:126.85px;--w:84.75px">すべてのプロジェクトを更新</div>
<div class="mt" style="left:24px;top:141.85px;--w:25.75px">保存(S)</div>
<div class="mt" style="left:197px;top:141.85px;--w:21px">Ctrl+S</div>
<div class="mt" style="left:24px;top:156.85px;--w:56.5px">別名で保存(A)...</div>
<div class="mt" style="left:175px;top:156.85px;--w:43px">Ctrl+Shift+S</div>
<div class="mt" style="left:24px;top:171.85px;--w:56px">コピーを保存(Y)...</div>
<div class="mt" style="left:181px;top:171.85px;--w:37px">Ctrl+Alt+S</div>
<div class="mt" style="left:24px;top:186.85px;--w:42px">すべてを保存</div>
<div class="mt dis" style="left:24px;top:201.85px;--w:26.5px">復帰(R)</div>
<div class="sep" style="top:218.85px"></div>
<div class="mt" style="left:24px;top:221.70px;--w:39.5px">設定の同期</div>
<svg class="arr" style="left:220px;top:225.70px" width="5" height="7" viewBox="0 0 5 7"><polyline points="1.2,1.2 3.8,3.5 1.2,5.8" fill="none" stroke="currentColor" stroke-width="1.1"/></svg>
<div class="sep" style="top:238.70px"></div>
<div class="mt" style="left:24px;top:241.55px;--w:45.25px">キャプチャ(T)...</div>
<div class="mt" style="left:210px;top:241.55px;--w:8px">F5</div>
<div class="mt dis" style="left:24px;top:256.55px;--w:64px">バッチキャプチャ(B)...</div>
<div class="mt dis" style="left:210px;top:256.55px;--w:8px">F6</div>
<div class="sep" style="top:273.55px"></div>
<div class="mt dis" style="left:24px;top:276.40px;--w:62px">メディアをリンク(L)...</div>
<div class="mt dis" style="left:24px;top:291.40px;--w:66px">オフラインにする(O)...</div>
<div class="sep" style="top:308.40px"></div>
<div class="mt" style="left:24px;top:311.25px;--w:84.5px">Adobe Dynamic Link(K)</div>
<svg class="arr" style="left:220px;top:315.25px" width="5" height="7" viewBox="0 0 5 7"><polyline points="1.2,1.2 3.8,3.5 1.2,5.8" fill="none" stroke="currentColor" stroke-width="1.1"/></svg>
<div class="sep" style="top:328.25px"></div>
<div class="mt dis" style="left:24px;top:331.10px;--w:109.75px">メディアブラウザーから読み込み(M)</div>
<div class="mt dis" style="left:183px;top:331.10px;--w:35px">Ctrl+Alt+I</div>
<div class="mt" style="left:24px;top:346.10px;--w:44.75px">読み込み(I)...</div>
<div class="mt" style="left:199px;top:346.10px;--w:19px">Ctrl+I</div>
<div class="mt dis" style="left:24px;top:361.10px;--w:113.5px">最近使用したファイルを読み込む(F)</div>
<svg class="arr dis" style="left:220px;top:365.10px" width="5" height="7" viewBox="0 0 5 7"><polyline points="1.2,1.2 3.8,3.5 1.2,5.8" fill="none" stroke="currentColor" stroke-width="1.1"/></svg>
<div class="sep" style="top:378.10px"></div>
<div class="mt" style="left:24px;top:380.95px;--w:37.25px">書き出し(E)</div>
<svg class="arr" style="left:220px;top:384.95px" width="5" height="7" viewBox="0 0 5 7"><polyline points="1.2,1.2 3.8,3.5 1.2,5.8" fill="none" stroke="currentColor" stroke-width="1.1"/></svg>
<div class="sep" style="top:397.95px"></div>
<div class="mt" style="left:24px;top:400.80px;--w:57.25px">プロパティ情報(G)</div>
<svg class="arr" style="left:220px;top:404.80px" width="5" height="7" viewBox="0 0 5 7"><polyline points="1.2,1.2 3.8,3.5 1.2,5.8" fill="none" stroke="currentColor" stroke-width="1.1"/></svg>
<div class="sep" style="top:417.80px"></div>
<div class="mt" style="left:24px;top:420.65px;--w:62px">プロジェクト設定(P)</div>
<svg class="arr" style="left:220px;top:424.65px" width="5" height="7" viewBox="0 0 5 7"><polyline points="1.2,1.2 3.8,3.5 1.2,5.8" fill="none" stroke="currentColor" stroke-width="1.1"/></svg>
<div class="sep" style="top:437.65px"></div>
<div class="mt" style="left:24px;top:440.50px;--w:91px">プロジェクトマネージャー(M)...</div>
<div class="sep" style="top:457.50px"></div>
<div class="mt" style="left:24px;top:460.35px;--w:26.5px">終了(X)</div>
<div class="mt" style="left:194px;top:460.35px;--w:24px">Ctrl+Q</div>
</div>
<div class="menu" style="left:230px;top:20px;width:211px;height:293px">
<div class="mt" style="left:24px;top:2.00px;--w:51.5px">プロジェクト(P)...</div>
<div class="mt" style="left:157px;top:2.00px;--w:39px">Ctrl+Alt+N</div>
<div class="mt" style="left:24px;top:17.00px;--w:59.5px">チームプロジェクト...</div>
<div class="mt" style="left:24px;top:32.00px;--w:46px">シーケンス(S)...</div>
<div class="mt" style="left:173px;top:32.00px;--w:23px">Ctrl+N</div>
<div class="mt dis" style="left:24px;top:47.00px;--w:94.5px">クリップから取得したシーケンス</div>
<div class="mt dis" style="left:24px;top:62.00px;--w:21.2px">ビン(B)</div>
<div class="mt dis" style="left:24px;top:77.00px;--w:27.5px">検索ビン</div>
<div class="mt" style="left:24px;top:92.00px;--w:81.5px">プロジェクトのショートカット</div>
<div class="mt dis" style="left:24px;top:107.00px;--w:108.5px">リンクされているチームプロジェクト...</div>
<div class="mt dis" style="left:24px;top:122.00px;--w:69.5px">オフラインファイル(O)...</div>
<div class="mt dis" style="left:24px;top:137.00px;--w:57.5px">調整レイヤー(A)...</div>
<div class="mt" style="left:24px;top:152.00px;--w:65.5px">レガシータイトル(T)...</div>
<div class="mt" style="left:24px;top:167.00px;--w:82.5px">Photoshop ファイル(H)...</div>
<div class="sep" style="top:184.00px"></div>
<div class="mt" style="left:24px;top:186.85px;--w:60.5px">カラーバー＆トーン...</div>
<div class="mt" style="left:24px;top:201.85px;--w:46.5px">ブラックビデオ...</div>
<div class="mt" style="left:24px;top:216.85px;--w:41.2px">キャプション...</div>
<div class="mt" style="left:24px;top:231.85px;--w:39.5px">カラーマット...</div>
<div class="mt" style="left:24px;top:246.85px;--w:74.3px">HD カラーバー＆トーン...</div>
<div class="mt" style="left:24px;top:261.85px;--w:65.5px">カウントダウンマーク...</div>
<div class="hl" style="top:276.85px"></div>
<div class="mt" style="left:24px;top:276.85px;--w:41.2px">クリアビデオ...</div>
</div>
<svg class="a" style="left:311.5px;top:305px" width="9" height="13" viewBox="0 0 9 13"><path d="M0.6,0.6 L0.6,10 L2.9,8 L4.6,11.8 L6.1,11.1 L4.5,7.5 L7.6,7.5 Z" fill="#fff" stroke="#000" stroke-width="0.8" stroke-linejoin="round"/></svg>

<div class="a" style="left:0;top:0;width:2px;height:720px;background:#0a0a0a"></div>

<script>
(function(){
var els=document.querySelectorAll('[style*="--w"]');
for(var i=0;i<els.length;i++){var e=els[i];var w=parseFloat(e.style.getPropertyValue('--w'));
var r=e.getBoundingClientRect().width; if(r>0&&w>0){e.style.transform='scaleX('+(w/r)+')';}}
})();
</script>
</body></html>
